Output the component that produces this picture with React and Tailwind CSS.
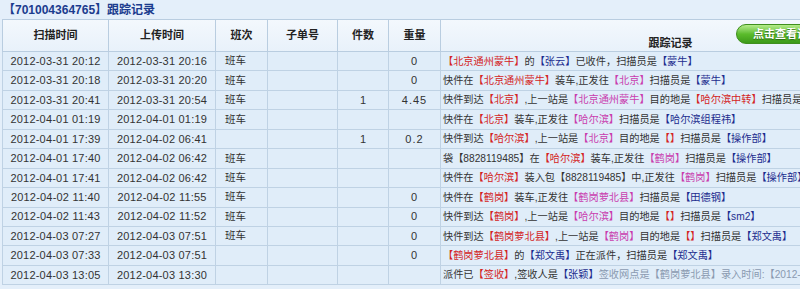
import React from "react";

const R = "text-[#d42424]";
const M = "text-[#c93cae]";
const B = "text-[#1c2c8e]";
const G = "text-[#8a9ab0]";

const rows = [
  ["2012-03-31 20:12", "2012-03-31 20:16", "班车", "", "", "0", [[R, "【北京通州蒙牛】"], ["", "的"], [B, "【张云】"], ["", "已收件，扫描员是"], [B, "【蒙牛】"]]],
  ["2012-03-31 20:18", "2012-03-31 20:20", "班车", "", "", "0", [["", "快件在"], [R, "【北京通州蒙牛】"], ["", "装车,正发往"], [M, "【北京】"], ["", "扫描员是"], [B, "【蒙牛】"]]],
  ["2012-03-31 20:41", "2012-03-31 20:54", "班车", "", "1", "4.45", [["", "快件到达"], [R, "【北京】"], ["", ",上一站是"], [M, "【北京通州蒙牛】"], ["", "目的地是"], [R, "【哈尔滨中转】"], ["", "扫描员是"], [B, "【操作部】"]]],
  ["2012-04-01 01:19", "2012-04-01 01:19", "班车", "", "", "", [["", "快件在"], [R, "【北京】"], ["", "装车,正发往"], [M, "【哈尔滨】"], ["", "扫描员是"], [B, "【哈尔滨组程祎】"]]],
  ["2012-04-01 17:39", "2012-04-02 06:41", "", "", "1", "0.2", [["", "快件到达"], [R, "【哈尔滨】"], ["", ",上一站是"], [M, "【北京】"], ["", "目的地是"], [R, "【】"], ["", "扫描员是"], [B, "【操作部】"]]],
  ["2012-04-01 17:40", "2012-04-02 06:42", "班车", "", "", "", [["", "袋【8828119485】在"], [R, "【哈尔滨】"], ["", "装车,正发往"], [M, "【鹤岗】"], ["", "扫描员是"], [B, "【操作部】"]]],
  ["2012-04-01 17:41", "2012-04-02 06:42", "班车", "", "", "", [["", "快件在"], [R, "【哈尔滨】"], ["", "装入包【8828119485】中,正发往"], [M, "【鹤岗】"], ["", "扫描员是"], [B, "【操作部】"]]],
  ["2012-04-02 11:40", "2012-04-02 11:55", "班车", "", "", "0", [["", "快件在"], [R, "【鹤岗】"], ["", "装车,正发往"], [M, "【鹤岗萝北县】"], ["", "扫描员是"], [B, "【田德钢】"]]],
  ["2012-04-02 11:43", "2012-04-02 11:52", "班车", "", "", "0", [["", "快件到达"], [R, "【鹤岗】"], ["", ",上一站是"], [M, "【哈尔滨】"], ["", "目的地是"], [R, "【】"], ["", "扫描员是"], [B, "【sm2】"]]],
  ["2012-04-03 07:27", "2012-04-03 07:51", "班车", "", "", "0", [["", "快件到达"], [R, "【鹤岗萝北县】"], ["", ",上一站是"], [M, "【鹤岗】"], ["", "目的地是"], [R, "【】"], ["", "扫描员是"], [B, "【郑文禹】"]]],
  ["2012-04-03 07:33", "2012-04-03 07:51", "", "", "", "0", [[R, "【鹤岗萝北县】"], ["", "的"], [B, "【郑文禹】"], ["", "正在派件，扫描员是"], [B, "【郑文禹】"]]],
  ["2012-04-03 13:05", "2012-04-03 13:30", "", "", "", "", [["", "派件已"], [R, "【签收】"], ["", ",签收人是"], [B, "【张颖】"], [G, "签收网点是【鹤岗萝北县】录入时间:【2012-04-03 13:05】"]]],
];

const th = "border border-[#b9cde0] font-bold text-[#222] text-[11px] text-center align-middle";
const td = "border border-[#bfd2e4] text-[#333] whitespace-nowrap overflow-hidden";

export default function App() {
  return (
    <div
      className="w-[800px] h-[289px] overflow-hidden bg-[#e4effa]"
      style={{ fontFamily: '"Liberation Sans", "Noto Sans CJK SC", sans-serif' }}
    >
      <div className="h-[19px] pl-[3px] flex items-center text-[12px] font-bold text-[#1b3c8e] whitespace-nowrap">
        【701004364765】跟踪记录
      </div>
      <div className="pl-[2px]">
        <table className="table-fixed border-collapse w-[898px]">
          <colgroup>
            <col className="w-[106px]" />
            <col className="w-[107px]" />
            <col className="w-[52px]" />
            <col className="w-[70px]" />
            <col className="w-[51px]" />
            <col className="w-[52px]" />
            <col className="w-[460px]" />
          </colgroup>
          <thead>
            <tr className="h-[32px] bg-gradient-to-b from-[#f3f8fd] to-[#e8f1fa]">
              <th className={th}>扫描时间</th>
              <th className={th}>上传时间</th>
              <th className={th}>班次</th>
              <th className={th}>子单号</th>
              <th className={th}>件数</th>
              <th className={th}>重量</th>
              <th className={th + " p-0"}>
                <div className="flex flex-col h-[31px]">
                  <div className="pl-[295px] pt-[4px]">
                    <div className="h-[20px] w-[110px] rounded-full border border-[#3f8f1e] bg-gradient-to-b from-[#b4ec8a] via-[#5cbc2c] to-[#3c9a18] flex items-center pl-[16px] text-white text-[11px] font-bold whitespace-nowrap [text-shadow:0_1px_1px_#2a6a10]">
                      点击查看详情
                    </div>
                  </div>
                  <div className="-mt-[7px] text-center leading-[12px]">跟踪记录</div>
                </div>
              </th>
            </tr>
          </thead>
          <tbody>
            {rows.map((r, i) => (
              <tr key={i} className="h-[19.45px] bg-[#e0edf9]">
                <td className={td + " text-center text-[11px] tracking-[0.2px]"}>{r[0]}</td>
                <td className={td + " text-center text-[11px] tracking-[0.2px]"}>{r[1]}</td>
                <td className={td + " pl-[9px] text-[10.5px]"}>{r[2]}</td>
                <td className={td}>{r[3]}</td>
                <td className={td + " text-center text-[11px]"}>{r[4]}</td>
                <td className={td + " text-center text-[11px] tracking-[1px]"}>{r[5]}</td>
                <td className={td + " pl-[2px] text-[10.2px]"}>
                  {r[6].map(([c, t], j) => (
                    <span key={j} className={c}>
                      {t}
                    </span>
                  ))}
                </td>
              </tr>
            ))}
          </tbody>
        </table>
      </div>
    </div>
  );
}
